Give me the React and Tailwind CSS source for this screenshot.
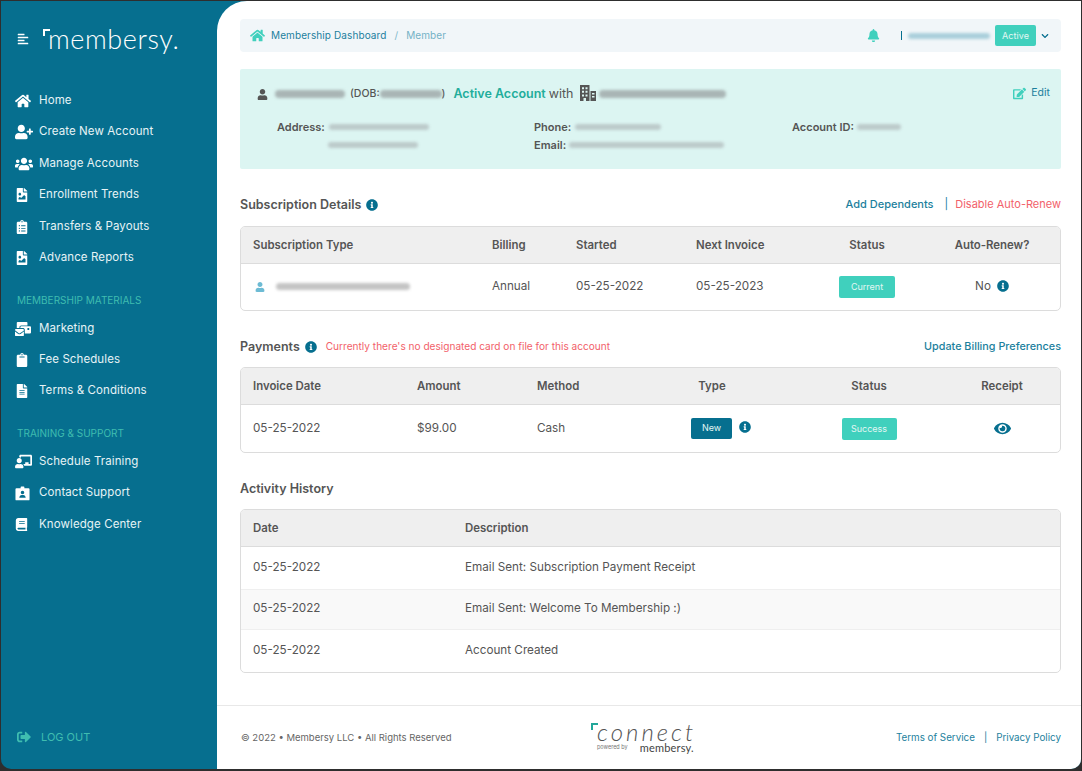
import {
  FaAlignLeft,
  FaBell,
  FaBook,
  FaChalkboardTeacher,
  FaChevronDown,
  FaClipboard,
  FaClipboardList,
  FaEdit,
  FaEye,
  FaFileAlt,
  FaFileImage,
  FaHome,
  FaInfoCircle,
  FaMailBulk,
  FaSignOutAlt,
  FaUser,
  FaUserPlus,
  FaUsers,
} from "react-icons/fa";

function BadgeIcon({ size, className }) {
  return (
    <svg width={size} height={size} viewBox="0 0 16 16" className={className} fill="currentColor">
      <path
        fillRule="evenodd"
        d="M1.5 2.5H6V1.2C6 .8 6.3.5 6.7.5h2.6c.4 0 .7.3.7.7v1.3h4.5c.6 0 1 .4 1 1v10.8c0 .6-.4 1-1 1H1.5c-.6 0-1-.4-1-1V3.5c0-.6.4-1 1-1ZM8 5a1.9 1.9 0 1 0 0 3.8A1.9 1.9 0 0 0 8 5Zm-3.4 7.6h6.8c0-1.8-1.2-3-2.6-3H7.2c-1.4 0-2.6 1.2-2.6 3Z"
      />
    </svg>
  );
}

function BuildingIcon({ className }) {
  return (
    <svg width="16" height="16" viewBox="0 0 16 16" className={className} fill="currentColor">
      <path
        fillRule="evenodd"
        d="M0 0h9.5v16H6v-3H3.5v3H0V0Zm2 2.2v2h2v-2H2Zm3.5 0v2h2v-2h-2ZM2 5.8v2h2v-2H2Zm3.5 0v2h2v-2h-2ZM2 9.4v2h2v-2H2Zm3.5 0v2h2v-2h-2Z"
      />
      <path fillRule="evenodd" d="M10.5 6H16v10h-5.5V6Zm1.5 2v1.6h2.5V8H12Zm0 3v1.6h2.5V11H12Z" />
    </svg>
  );
}

const mainNav = [
  { label: "Home", icon: FaHome, size: 16, y: "h-[31px]" },
  { label: "Create New Account", icon: FaUserPlus, size: 18, y: "h-[32px]" },
  { label: "Manage Accounts", icon: FaUsers, size: 18, y: "h-[31px]" },
  { label: "Enrollment Trends", icon: FaFileImage, size: 14, y: "h-[32px]" },
  { label: "Transfers & Payouts", icon: FaClipboardList, size: 14, y: "h-[31px]" },
  { label: "Advance Reports", icon: FaFileImage, size: 14, y: "h-[32px]" },
];

const materialsNav = [
  { label: "Marketing", icon: FaMailBulk, size: 16, y: "h-[31px]" },
  { label: "Fee Schedules", icon: FaClipboard, size: 14, y: "h-[31px]" },
  { label: "Terms & Conditions", icon: FaFileAlt, size: 14, y: "h-[31px]" },
];

const supportNav = [
  { label: "Schedule Training", icon: FaChalkboardTeacher, size: 17, y: "h-[31px]" },
  { label: "Contact Support", icon: BadgeIcon, size: 15, y: "h-[32px]" },
  { label: "Knowledge Center", icon: FaBook, size: 13, y: "h-[31px]" },
];

const activity = [
  { date: "05-25-2022", text: "Email Sent: Subscription Payment Receipt", striped: false },
  { date: "05-25-2022", text: "Email Sent: Welcome To Membership :)", striped: true },
  { date: "05-25-2022", text: "Account Created", striped: false },
];

function NavItem({ item }) {
  const Icon = item.icon;
  return (
    <a className={`flex items-center text-[11.5px] tracking-[0.1px] text-[#e6f3f6] ${item.y}`}>
      <span className="flex w-[24px] shrink-0 justify-start">
        <Icon size={item.size} className="text-white" />
      </span>
      {item.label}
    </a>
  );
}

// redacted text in the screenshot
function Smudge({ className }) {
  return <span className={`inline-block rounded-full blur-[1.5px] ${className}`} />;
}

function Info({ className = "" }) {
  return <FaInfoCircle size={12} className={`shrink-0 text-[#066f8f] ${className}`} />;
}

function Pill({ children, className }) {
  return (
    <span className={`flex items-center justify-center rounded-[2px] text-[9px] text-[#e3f7f3] ${className}`}>
      {children}
    </span>
  );
}

export default function App() {
  return (
    <div
      className="h-[771px] w-[1082px] overflow-hidden bg-[#2e2e2e] px-px pb-[2px] pt-px text-[#555]"
      style={{ fontFamily: "Inter, 'Open Sans', sans-serif" }}
    >
      <div className="flex h-full overflow-hidden rounded-b-[10px] bg-[#066f8f]">
        {/* Sidebar */}
        <aside className="flex w-[216px] shrink-0 flex-col pl-[14px]">
          <div className="flex h-[84px] items-start pt-[23px]">
            <FaAlignLeft size={12} className="ml-[2px] mt-[9px] text-white" />
            <div className="relative ml-[19px] text-[27px] font-light leading-[30px] tracking-[0.6px] text-white" style={{ fontFamily: "Lato, sans-serif" }}>
              <span className="absolute -left-[5px] top-[5px] h-[7px] w-[7px] border-l-2 border-t-2 border-white" />
              membersy.
            </div>
          </div>
          <nav className="flex flex-col">
            {mainNav.map((item) => (
              <NavItem key={item.label} item={item} />
            ))}
          </nav>
          <p className="mb-[5px] ml-[2px] mt-[19px] text-[10px] text-[#3fbdb0]">MEMBERSHIP MATERIALS</p>
          <nav className="flex flex-col">
            {materialsNav.map((item) => (
              <NavItem key={item.label} item={item} />
            ))}
          </nav>
          <p className="mb-[5px] ml-[2px] mt-[20px] text-[10px] text-[#3fbdb0]">TRAINING &amp; SUPPORT</p>
          <nav className="flex flex-col">
            {supportNav.map((item) => (
              <NavItem key={item.label} item={item} />
            ))}
          </nav>
          <a className="mt-auto mb-[24px] flex items-center pl-[2px] text-[11px] text-[#3fbdb0]">
            <FaSignOutAlt size={14} className="mr-[10px]" />
            LOG OUT
          </a>
        </aside>

        {/* Main */}
        <main className="flex min-w-0 flex-1 flex-col rounded-tl-[30px] bg-white">
          <div className="flex-1 pl-[23px] pr-[20px] pt-[18px]">
            {/* Breadcrumb */}
            <div className="flex h-[33px] items-center rounded-[4px] bg-[#f1f6f9] pl-[10px] pr-[12px] text-[10px] tracking-[0.1px]">
              <FaHome size={15} className="mr-[6px] text-[#40d0bd]" />
              <span className="text-[#1c7f9d]">Membership Dashboard</span>
              <span className="mx-[8px] text-[#7fb8c9]">/</span>
              <span className="text-[#74b2c6]">Member</span>
              <FaBell size={13} className="ml-auto text-[#40d0bd]" />
              <span className="ml-[21px] h-[9px] w-px bg-[#066f8f]" />
              <Smudge className="ml-[6px] h-[6px] w-[82px] bg-[#a9cfdb]" />
              <Pill className="ml-[5px] h-[21px] w-[41px] bg-[#40d0bd]">Active</Pill>
              <FaChevronDown size={8} className="ml-[5px] text-[#066f8f]" />
            </div>

            {/* Member banner */}
            <section className="mt-[17px] h-[100px] rounded-[2px] bg-[#dcf5f2] pl-[17px] pr-[11px] pt-[15px]">
              <div className="flex h-[20px] items-center text-[12px]">
                <FaUser size={11} className="text-[#555]" />
                <Smudge className="ml-[7px] h-[8px] w-[70px] bg-[#a9b5b5]" />
                <span className="ml-[5px] text-[10.5px] font-medium">(DOB:</span>
                <Smudge className="h-[8px] w-[62px] bg-[#a9b5b5]" />
                <span className="text-[10.5px] font-medium">)</span>
                <span className="ml-[8px] text-[12.5px] font-semibold text-[#22ad9b]">Active Account</span>
                <span className="ml-[3px] text-[12.5px]">with</span>
                <BuildingIcon className="ml-[6px] -translate-y-[1px] text-[#555]" />
                <Smudge className="ml-[3px] h-[8px] w-[127px] bg-[#a9b5b5]" />
                <a className="ml-auto flex -translate-y-[1px] items-center text-[10.5px] text-[#1c7f9d]">
                  <FaEdit size={13} className="mr-[5px] text-[#40d0bd]" />
                  Edit
                </a>
              </div>
              <div className="mt-[14px] grid grid-cols-[257px_258px_1fr] pl-[20px] text-[11px] font-semibold leading-[18px]">
                <div>
                  <div className="flex items-center">
                    Address:
                    <Smudge className="ml-[4px] h-[6px] w-[100px] bg-[#bccaca]" />
                  </div>
                  <div className="flex h-[18px] items-center pl-[51px]">
                    <Smudge className="h-[6px] w-[90px] bg-[#bccaca]" />
                  </div>
                </div>
                <div>
                  <div className="flex items-center">
                    Phone:
                    <Smudge className="ml-[4px] h-[6px] w-[86px] bg-[#bccaca]" />
                  </div>
                  <div className="flex items-center">
                    Email:
                    <Smudge className="ml-[3px] h-[6px] w-[155px] bg-[#bccaca]" />
                  </div>
                </div>
                <div className="flex h-[18px] items-center">
                  Account ID:
                  <Smudge className="ml-[3px] h-[6px] w-[44px] bg-[#bccaca]" />
                </div>
              </div>
            </section>

            {/* Subscription */}
            <div className="mt-[26px] flex h-[20px] items-center">
              <h2 className="pt-[1px] text-[12.5px] font-semibold">Subscription Details</h2>
              <Info className="ml-[5px]" />
              <div className="ml-auto flex -translate-y-[1px] items-center text-[11px]">
                <a className="font-medium text-[#1c7f9d]">Add Dependents</a>
                <span className="ml-[11px] mr-[7px] text-[#1c7f9d]">|</span>
                <a className="text-[#f2616a]">Disable Auto-Renew</a>
              </div>
            </div>
            <div className="mt-[11px] h-[85px] overflow-hidden rounded-[5px] border border-[#dcdcdc]">
              <div className="grid h-[37px] grid-cols-[239px_84px_120px_126px_114px_1fr] items-center border-b border-[#dcdcdc] bg-[#efefef] pt-[1px] text-[11.4px] font-semibold">
                <span className="pl-[12px]">Subscription Type</span>
                <span className="pl-[12px]">Billing</span>
                <span className="pl-[12px]">Started</span>
                <span className="pl-[12px]">Next Invoice</span>
                <span className="text-center">Status</span>
                <span className="text-center">Auto-Renew?</span>
              </div>
              <div className="grid h-[45px] grid-cols-[239px_84px_120px_126px_114px_1fr] items-center text-[11.7px]">
                <span className="flex items-center pl-[14px]">
                  <FaUser size={10} className="text-[#6dbbd4]" />
                  <Smudge className="ml-[11px] h-[7px] w-[134px] bg-[#c4c4c4]" />
                </span>
                <span className="pl-[12px]">Annual</span>
                <span className="pl-[12px]">05-25-2022</span>
                <span className="pl-[12px]">05-25-2023</span>
                <span className="flex justify-center">
                  <Pill className="h-[22px] w-[56px] bg-[#40d0bd]">Current</Pill>
                </span>
                <span className="flex items-center justify-center">
                  No
                  <Info className="ml-[6px]" />
                </span>
              </div>
            </div>

            {/* Payments */}
            <div className="mt-[26px] flex h-[20px] items-center">
              <h2 className="text-[12.5px] font-semibold">Payments</h2>
              <Info className="ml-[5px]" />
              <span className="ml-[9px] text-[10.1px] text-[#f2616a]">Currently there's no designated card on file for this account</span>
              <a className="ml-auto text-[10.8px] font-medium text-[#1c7f9d]">Update Billing Preferences</a>
            </div>
            <div className="mt-[10px] h-[86px] overflow-hidden rounded-[5px] border border-[#dcdcdc]">
              <div className="grid h-[37px] grid-cols-[164px_120px_105px_164px_150px_1fr] items-center border-b border-[#dcdcdc] bg-[#efefef] pt-[1px] text-[11.4px] font-semibold">
                <span className="pl-[12px]">Invoice Date</span>
                <span className="pl-[12px]">Amount</span>
                <span className="pl-[12px]">Method</span>
                <span className="text-center">Type</span>
                <span className="text-center">Status</span>
                <span className="text-center">Receipt</span>
              </div>
              <div className="grid h-[47px] grid-cols-[164px_120px_105px_164px_150px_1fr] items-center text-[11.7px]">
                <span className="pl-[12px]">05-25-2022</span>
                <span className="pl-[12px]">$99.00</span>
                <span className="pl-[12px]">Cash</span>
                <span className="flex items-center justify-center pl-[18px]">
                  <Pill className="mb-[1px] h-[21px] w-[41px] items-start bg-[#066f8f] pt-[3px]">New</Pill>
                  <Info className="mb-[3px] ml-[7px]" />
                </span>
                <span className="flex justify-center">
                  <Pill className="h-[22px] w-[55px] bg-[#40d0bd]">Success</Pill>
                </span>
                <span className="flex justify-center">
                  <FaEye size={17} className="mb-[1px] text-[#066f8f]" />
                </span>
              </div>
            </div>

            {/* Activity */}
            <h2 className="mt-[26px] flex h-[20px] items-center pt-[1px] text-[12.5px] font-semibold">Activity History</h2>
            <div className="mt-[10px] h-[164px] overflow-hidden rounded-[5px] border border-[#dcdcdc]">
              <div className="grid h-[37px] grid-cols-[224px_1fr] items-center border-b border-[#dcdcdc] bg-[#efefef] pt-[1px] text-[11.4px] font-semibold">
                <span className="pl-[12px]">Date</span>
                <span>Description</span>
              </div>
              {activity.map((row, i) => (
                <div
                  key={i}
                  className={`grid h-[41.5px] grid-cols-[224px_1fr] items-center text-[11.7px] ${
                    row.striped ? "border-y border-[#efefef] bg-[#f9f9f9]" : ""
                  }`}
                >
                  <span className="pl-[12px]">{row.date}</span>
                  <span>{row.text}</span>
                </div>
              ))}
            </div>
          </div>

          {/* Footer */}
          <footer className="flex h-[64px] shrink-0 items-center border-t border-[#e8e8e8] pl-[24px] pr-[20px] pt-[1px] text-[9.5px]">
            <span className="w-[350px] text-[#666]">© 2022 • Membersy LLC • All Rights Reserved</span>
            <div className="relative -mt-[4px] w-[110px] pl-[6px]">
              <span className="absolute left-0 top-[3px] h-[7px] w-[7px] border-l-2 border-t-2 border-[#22a79a]" />
              <div className="text-[24px] font-light italic leading-[23px] tracking-[3px] text-[#555]" style={{ fontFamily: "Lato, sans-serif" }}>
                connect
              </div>
              <div className="flex h-[10px] items-center whitespace-nowrap text-[5.5px] text-[#777]">
                powered by
                <span className="ml-[12px] text-[11px] leading-[10px] tracking-[0.2px] text-[#444]" style={{ fontFamily: "Lato, sans-serif" }}>membersy.</span>
              </div>
            </div>
            <div className="ml-auto flex items-center text-[9.8px] text-[#1c7f9d]">
              <a>Terms of Service</a>
              <span className="mx-[9px] text-[#1c7f9d]">|</span>
              <a>Privacy Policy</a>
            </div>
          </footer>
        </main>
      </div>
    </div>
  );
}
